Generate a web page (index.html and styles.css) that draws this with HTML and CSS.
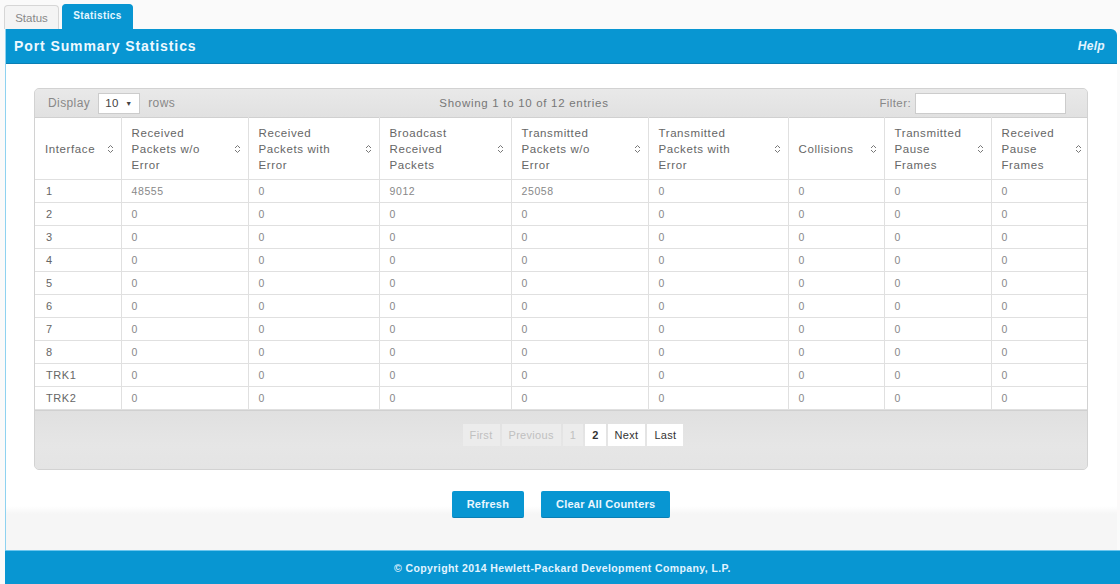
FILE: index.html
```html
<!DOCTYPE html>
<html>
<head>
	<meta charset="UTF-8">
	<title>Port Summary Statistics</title>
	<link rel="stylesheet" href="styles.css">
</head>
<body>
<div class="tabs">
	<span class="tab">Status</span>
	<span class="tab on">Statistics</span>
</div>
<div class="panel">
	<div class="panel-head">
		<span class="title">Port Summary Statistics</span>
		<span class="help">Help</span>
	</div>
	<div class="panel-body">
		<div class="dt">
			<div class="toolbar">
				<div class="len">Display <span class="sel">10 <i>&#9660;</i></span> rows</div>
				<div class="info">Showing 1 to 10 of 12 entries</div>
				<div class="filter">Filter: <span class="inp"></span></div>
			</div>
			<table id="stats">
				<colgroup>
					<col style="width:86px"><col style="width:127px"><col style="width:131px">
					<col style="width:132px"><col style="width:137px"><col style="width:140px">
					<col style="width:96px"><col style="width:107px"><col style="width:98px">
				</colgroup>
				<thead>
					<tr>
						<th><div>Interface<b class="sort"></b></div></th>
						<th><div>Received<br>Packets w/o<br>Error<b class="sort"></b></div></th>
						<th><div>Received<br>Packets with<br>Error<b class="sort"></b></div></th>
						<th><div>Broadcast<br>Received<br>Packets<b class="sort"></b></div></th>
						<th><div>Transmitted<br>Packets w/o<br>Error<b class="sort"></b></div></th>
						<th><div>Transmitted<br>Packets with<br>Error<b class="sort"></b></div></th>
						<th><div>Collisions<b class="sort"></b></div></th>
						<th><div>Transmitted<br>Pause<br>Frames<b class="sort"></b></div></th>
						<th><div>Received<br>Pause<br>Frames<b class="sort"></b></div></th>
					</tr>
				</thead>
				<tbody></tbody>
			</table>
			<div class="pager">
				<span class="pg off">First</span><span class="pg off">Previous</span><span class="pg off">1</span><span class="pg cur">2</span><span class="pg">Next</span><span class="pg">Last</span>
			</div>
		</div>
		<div class="actions">
			<span class="btn">Refresh</span>
			<span class="btn">Clear All Counters</span>
		</div>
	</div>
</div>
<div class="footer">&copy; Copyright 2014 Hewlett-Packard Development Company, L.P.</div>
<script type="text/javascript">
	var rows = [
		["1","48555","0","9012","25058","0","0","0","0"],
		["2"],["3"],["4"],["5"],["6"],["7"],["8"],["TRK1"],["TRK2"]
	];
	var tb = document.querySelector("#stats tbody");
	var sortSvg = '<svg width="7" height="10" viewBox="0 0 7 10"><path d="M1 4L3.5 1.5L6 4M1 6L3.5 8.5L6 6" fill="none" stroke="#777" stroke-width="1"/></svg>';
	var s = document.getElementsByClassName("sort");
	for(var k = 0;k<s.length;k++){
		s[k].innerHTML = sortSvg;
	}
	for(var i = 0;i<rows.length;i++){
		var tr = document.createElement("tr");
		for(var j = 0;j<9;j++){
			var td = document.createElement("td");
			td.textContent = rows[i][j] !== undefined ? rows[i][j] : "0";
			tr.appendChild(td);
		}
		tb.appendChild(tr);
	}
</script>
</body>
</html>
```

FILE: styles.css
```css
body{
	margin:0;
	background:#fafafa;
	font-family:"Liberation Sans", Arial, sans-serif;
	color:#555;
	overflow:hidden;
}
.tabs{
	height:29px;
	display:flex;
	align-items:flex-end;
	padding-left:4px;
	gap:3px;
}
.tab{
	width:55px;
	box-sizing:border-box;
	text-align:center;
	height:24px;
	line-height:24px;
	font-size:11.5px;
	color:#888;
	background:#f4f4f4;
	border:1px solid #d6d6d6;
	border-bottom:none;
	border-radius:4px 4px 0 0;
}
.tab.on{
	width:71px;
	background:#0896d2;
	border-color:#0896d2;
	color:#e6f6ff;
	font-weight:bold;
	font-size:10px;
	letter-spacing:0.4px;
	height:25px;
	line-height:22px;
}
.panel{
	margin:0 3px 0 5px;
	border-left:1px solid #8ed2f0;
}
.panel-head{
	height:35px;
	background:#0896d2;
	border-bottom:1px solid #0a7fb4;
	border-radius:0 6px 0 0;
	display:flex;
	align-items:center;
	justify-content:space-between;
	padding:0 12px 0 8px;
	box-sizing:border-box;
	color:#fff;
}
.title{
	font-size:14px;
	font-weight:bold;
	letter-spacing:0.9px;
	color:#eef9ff;
}
.help{
	font-size:12px;
	font-weight:bold;
	font-style:italic;
	letter-spacing:0.3px;
	color:#e2f4ff;
}
.panel-body{
	padding:24px 29px 32px 28px;
	background:linear-gradient(#fff 0, #fff 442px, #f6f6f6 450px);
}
.dt{
	border:1px solid #d2d2d2;
	border-radius:5px;
	background:#e4e4e4;
	overflow:hidden;
}
.toolbar{
	height:28px;
	display:flex;
	align-items:center;
	justify-content:space-between;
	padding:0 21px 0 13px;
	font-size:11.5px;
	letter-spacing:0.4px;
	color:#888;
	background:linear-gradient(#e9e9e9,#e1e1e1);
}
.len{
	width:260px;
	display:flex;
	align-items:center;
	gap:8px;
	font-size:12px;
}
.sel{
	display:inline-block;
	width:34px;
	height:19px;
	line-height:19px;
	padding-left:6px;
	background:#fff;
	border:1px solid #ccc;
	color:#444;
	font-size:11.5px;
}
.sel i{
	font-style:normal;
	font-size:7px;
	vertical-align:1px;
	margin-left:3px;
}
.info{
	color:#777;
	letter-spacing:0.7px;
}
.filter{
	width:326px;
	display:flex;
	align-items:center;
	justify-content:flex-end;
	gap:4px;
}
.inp{
	display:inline-block;
	width:149px;
	height:19px;
	background:#fff;
	border:1px solid #ccc;
}
table{
	width:100%;
	table-layout:fixed;
	border-collapse:collapse;
	background:#fff;
}
th{
	height:61px;
	padding:0 7px 0 10px;
	border:1px solid #e0e0e0;
	border-top:1px solid #d0d0d0;
	font-weight:normal;
	font-size:11.5px;
	letter-spacing:0.6px;
	line-height:16px;
	color:#666;
	text-align:left;
}
th:first-child, td:first-child{
	border-left:none;
}
th:last-child, td:last-child{
	border-right:none;
}
th div{
	position:relative;
	padding-right:14px;
}
.sort{
	position:absolute;
	right:0;
	top:50%;
	margin-top:-5px;
	height:10px;
}
.sort svg{
	display:block;
}
td{
	height:21px;
	padding:0 10px 1px;
	border:1px solid #e0e0e0;
	border-top-color:#d8d8d8;
	font-size:10.5px;
	letter-spacing:0.6px;
	color:#888;
}
td:first-child{
	padding-left:11px;
	color:#666;
	font-size:11px;
}
.pager{
	height:59px;
	border-top:1px solid #d0d0d0;
	display:flex;
	justify-content:center;
	padding:13px 0 0 24px;
	box-sizing:border-box;
	gap:2px;
	background:linear-gradient(#e0e0e0,#e6e6e6 60%,#e4e4e4);
}
.pg{
	height:22px;
	line-height:22px;
	padding:0 7px;
	font-size:11px;
	letter-spacing:0.3px;
	color:#333;
	background:#fff;
}
.pg.off{
	background:#ececec;
	color:#c0c0c0;
}
.pg.cur{
	font-weight:bold;
}
.actions{
	display:flex;
	justify-content:center;
	gap:17px;
	padding-top:21px;
}
.btn{
	height:26px;
	line-height:26px;
	padding:0 15px;
	background:#0896d2;
	color:#eaf7ff;
	font-size:11px;
	font-weight:bold;
	letter-spacing:0.2px;
	border-radius:2px;
	border-bottom:1px solid #0a7fb4;
}
.footer{
	height:35px;
	line-height:35px;
	background:#0896d2;
	border-top:1px solid #6cc6ee;
	margin-left:5px;
	text-align:center;
	font-size:10.5px;
	font-weight:bold;
	letter-spacing:0.4px;
	color:#e2f4ff;
}
```
